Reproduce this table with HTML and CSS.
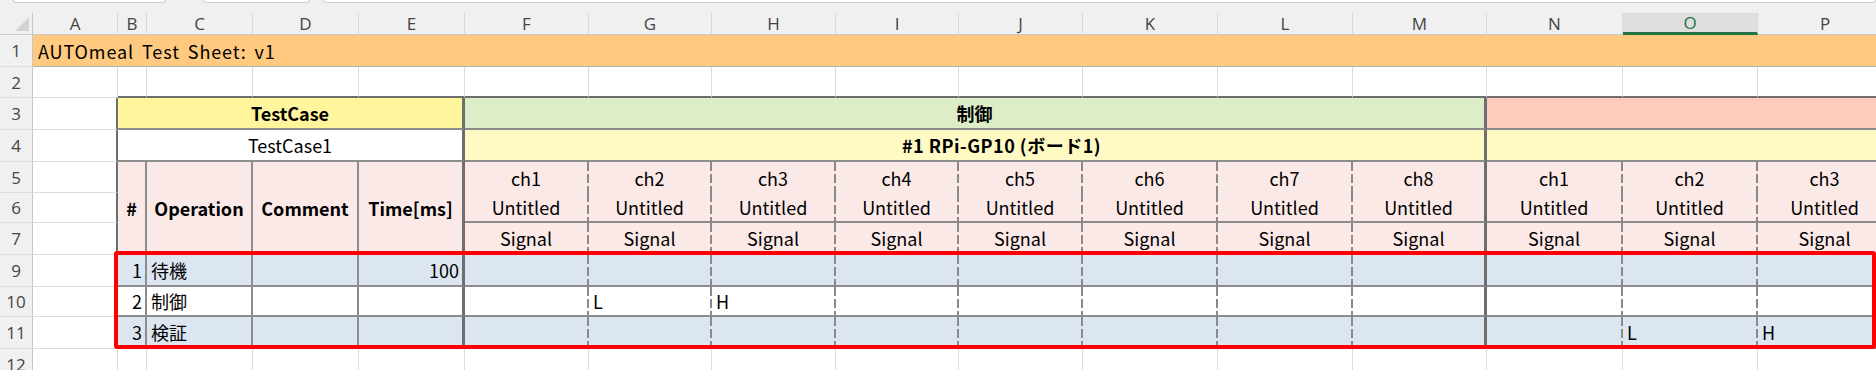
FILE: index.html
```html
<!DOCTYPE html>
<html lang="ja">
<head>
<meta charset="utf-8">
<title>AUTOmeal Test Sheet</title>
<link rel="stylesheet" href="styles.css">
</head>
<body>
<div class="app">
  <div class="topbar">
    <div class="box box-name"></div>
    <div class="box box-mid"></div>
    <div class="box box-formula"></div>
  </div>
  <div class="sheet">
    <!-- column headers -->
    <div class="ch corner"><svg width="14" height="14" viewBox="0 0 14 14"><polygon points="14,0 14,14 0,14" fill="#d4d4d4"/></svg></div>
    <div class="ch">A</div><div class="ch">B</div><div class="ch">C</div><div class="ch">D</div><div class="ch">E</div>
    <div class="ch">F</div><div class="ch">G</div><div class="ch">H</div><div class="ch">I</div><div class="ch">J</div>
    <div class="ch">K</div><div class="ch">L</div><div class="ch">M</div><div class="ch">N</div><div class="ch sel">O</div><div class="ch">P</div>

    <!-- row 1 -->
    <div class="rh">1</div>
    <div class="c title">AUTOmeal Test Sheet: v1</div>

    <!-- row 2 -->
    <div class="rh">2</div>
    <div class="c"></div>
    <div class="c tt"></div><div class="c tt"></div><div class="c tt"></div><div class="c tt"></div>
    <div class="c tt"></div><div class="c tt"></div><div class="c tt"></div><div class="c tt"></div>
    <div class="c tt"></div><div class="c tt"></div><div class="c tt"></div><div class="c tt"></div>
    <div class="c tt"></div><div class="c tt"></div><div class="c tt"></div>

    <!-- row 3 -->
    <div class="rh">3</div>
    <div class="c tl"></div>
    <div class="t tk yellow b ctr span4">TestCase</div>
    <div class="t tk green b ctr span8">制御</div>
    <div class="t salmon span3"></div>

    <!-- row 4 -->
    <div class="rh">4</div>
    <div class="c tl"></div>
    <div class="t tk white ctr span4">TestCase1</div>
    <div class="t tk lyellow b ctr span8 board">#1 RPi-GP10 (ボード1)</div>
    <div class="t lyellow span3"></div>

    <!-- row 5 -->
    <div class="rh">5</div>
    <div class="c tl"></div>
    <div class="t pink b ctr rows3">#</div>
    <div class="t pink b ctr rows3">Operation</div>
    <div class="t pink b ctr rows3">Comment</div>
    <div class="t tk pink b ctr rows3">Time[ms]</div>
    <div class="t dash nb pink ctr">ch1</div><div class="t dash nb pink ctr">ch2</div><div class="t dash nb pink ctr">ch3</div><div class="t dash nb pink ctr">ch4</div>
    <div class="t dash nb pink ctr">ch5</div><div class="t dash nb pink ctr">ch6</div><div class="t dash nb pink ctr">ch7</div><div class="t tk nb pink ctr">ch8</div>
    <div class="t dash nb pink ctr">ch1</div><div class="t dash nb pink ctr">ch2</div><div class="t dash nb pink ctr">ch3</div>

    <!-- row 6 -->
    <div class="rh">6</div>
    <div class="c tl"></div>
    <div class="t dash pink ctr">Untitled</div><div class="t dash pink ctr">Untitled</div><div class="t dash pink ctr">Untitled</div><div class="t dash pink ctr">Untitled</div>
    <div class="t dash pink ctr">Untitled</div><div class="t dash pink ctr">Untitled</div><div class="t dash pink ctr">Untitled</div><div class="t tk pink ctr">Untitled</div>
    <div class="t dash pink ctr">Untitled</div><div class="t dash pink ctr">Untitled</div><div class="t dash pink ctr">Untitled</div>

    <!-- row 7 -->
    <div class="rh">7</div>
    <div class="c tl"></div>
    <div class="t dash pink ctr">Signal</div><div class="t dash pink ctr">Signal</div><div class="t dash pink ctr">Signal</div><div class="t dash pink ctr">Signal</div>
    <div class="t dash pink ctr">Signal</div><div class="t dash pink ctr">Signal</div><div class="t dash pink ctr">Signal</div><div class="t tk pink ctr">Signal</div>
    <div class="t dash pink ctr">Signal</div><div class="t dash pink ctr">Signal</div><div class="t dash pink ctr">Signal</div>

    <!-- row 9 -->
    <div class="rh">9</div>
    <div class="c tl"></div>
    <div class="t blue r">1</div>
    <div class="t blue">待機</div>
    <div class="t blue"></div>
    <div class="t tk blue r">100</div>
    <div class="t dash blue"></div><div class="t dash blue"></div><div class="t dash blue"></div><div class="t dash blue"></div>
    <div class="t dash blue"></div><div class="t dash blue"></div><div class="t dash blue"></div><div class="t tk blue"></div>
    <div class="t dash blue"></div><div class="t dash blue"></div><div class="t dash blue"></div>

    <!-- row 10 -->
    <div class="rh">10</div>
    <div class="c tl"></div>
    <div class="t white r">2</div>
    <div class="t white">制御</div>
    <div class="t white"></div>
    <div class="t tk white r"></div>
    <div class="t dash white"></div><div class="t dash white">L</div><div class="t dash white">H</div><div class="t dash white"></div>
    <div class="t dash white"></div><div class="t dash white"></div><div class="t dash white"></div><div class="t tk white"></div>
    <div class="t dash white"></div><div class="t dash white"></div><div class="t dash white"></div>

    <!-- row 11 -->
    <div class="rh">11</div>
    <div class="c tl"></div>
    <div class="t blue r">3</div>
    <div class="t blue">検証</div>
    <div class="t blue"></div>
    <div class="t tk blue r"></div>
    <div class="t dash blue"></div><div class="t dash blue"></div><div class="t dash blue"></div><div class="t dash blue"></div>
    <div class="t dash blue"></div><div class="t dash blue"></div><div class="t dash blue"></div><div class="t tk blue"></div>
    <div class="t dash blue"></div><div class="t dash blue">L</div><div class="t dash blue">H</div>

    <!-- row 12 -->
    <div class="rh">12</div>
    <div class="c"></div><div class="c"></div><div class="c"></div><div class="c"></div><div class="c"></div>
    <div class="c"></div><div class="c"></div><div class="c"></div><div class="c"></div><div class="c"></div>
    <div class="c"></div><div class="c"></div><div class="c"></div><div class="c"></div><div class="c"></div><div class="c"></div>
  </div>
  <div class="focus"></div>
</div>
</body>
</html>
```

FILE: styles.css
```css
* {
  box-sizing: border-box;
  margin: 0;
  padding: 0;
}

html,
body {
  width: 1876px;
  height: 370px;
  overflow: hidden;
  background: #ffffff;
}

body {
  font-family: "Noto Sans CJK JP", "Noto Sans", sans-serif;
  color: #000000;
}

.app {
  position: relative;
  width: 1876px;
  height: 370px;
  overflow: hidden;
  background: #f0f0f0;
}

/* formula bar remnant */
.topbar {
  height: 13px;
  display: flex;
  align-items: flex-start;
  padding-left: 13px;
}

.box {
  height: 3px;
  background: #ffffff;
  border: 1px solid #d0d0d0;
  border-top: 0;
  border-radius: 0 0 4px 4px;
}

.box-name {
  width: 153px;
}

.box-mid {
  width: 107px;
  margin-left: 37px;
}

.box-formula {
  flex: 1;
  margin-left: 13px;
}

/* grid */
.sheet {
  display: grid;
  grid-template-columns: 33px 85px 29px 106px 106px 106px 124px 123px 124px 123px 124px 135px 135px 134px 136px 135px 135px;
  grid-template-rows: 22px 32px 31px 32px 32px 31px 30px 32px 32px 30px 32px 32px;
  background: #ffffff;
}

.ch,
.rh {
  display: flex;
  align-items: center;
  justify-content: center;
  background: #f0f0f0;
  color: #444444;
  font-family: "Open Sans", "Noto Sans", sans-serif;
  font-size: 17px;
  line-height: 1;
  border-right: 1px solid #d8d8d8;
  border-bottom: 1px solid #c8c8c8;
}

.ch.corner {
  justify-content: flex-end;
  align-items: flex-end;
  padding: 0 3px 3px 0;
  border-right-color: #c8c8c8;
}

.ch.sel {
  background: #dedede;
  color: #217346;
  border-bottom: 3px solid #217346;
}

.rh {
  border-right: 1px solid #c8c8c8;
  border-bottom: 1px solid #dcdcdc;
  font-size: 17px;
}

.c,
.t {
  display: flex;
  align-items: center;
  padding: 0 4px;
  font-size: 18px;
  line-height: 1;
  white-space: nowrap;
  overflow: hidden;
}

.c {
  border-right: 1px solid #dcdcdc;
  border-bottom: 1px solid #dcdcdc;
  background: #ffffff;
}

.title {
  grid-column: 2 / -1;
  background: #ffca7f;
  border-right: 0;
  border-bottom: 1px solid #b4b4b4;
  padding-left: 5px;
  letter-spacing: 0.9px;
  word-spacing: 3px;
}

.tt {
  border-bottom: 2px solid #6e6e6e;
}

.tl {
  border-right: 2px solid #6e6e6e;
}

/* table cells */
.t {
  border-right: 2px solid #8c8c8c;
  border-bottom: 2px solid #8c8c8c;
}

.t.tk {
  border-right: 3px solid #6e6e6e;
}

.t.dash {
  border-right: 0;
  padding-right: 6px;
  background-image: repeating-linear-gradient(to bottom, #8a8a8a 0 9px, transparent 9px 12px);
  background-size: 2px 100%;
  background-position: right top;
  background-repeat: no-repeat;
}

.t.nb {
  border-bottom: 0;
}

.t.board {
  padding-left: 58px;
  letter-spacing: 0.5px;
}

.span4 {
  grid-column: span 4;
}

.span8 {
  grid-column: span 8;
}

.span3 {
  grid-column: span 3;
}

.rows3 {
  grid-row: span 3;
}

.ctr {
  justify-content: center;
}

.r {
  justify-content: flex-end;
  padding-right: 3px;
}

.b {
  font-weight: 700;
}

.yellow {
  background-color: #fff59d;
}

.lyellow {
  background-color: #fff9c4;
}

.green {
  background-color: #dcedc8;
}

.salmon {
  background-color: #ffccbc;
}

.pink {
  background-color: #fbe9e7;
}

.blue {
  background-color: #dce6f1;
}

.white {
  background-color: #ffffff;
}

/* highlighted range annotation */
.focus {
  position: absolute;
  left: 114px;
  top: 251px;
  width: 1762px;
  height: 98px;
  border: 4px solid #ff0000;
  border-radius: 3px;
  pointer-events: none;
}
```
